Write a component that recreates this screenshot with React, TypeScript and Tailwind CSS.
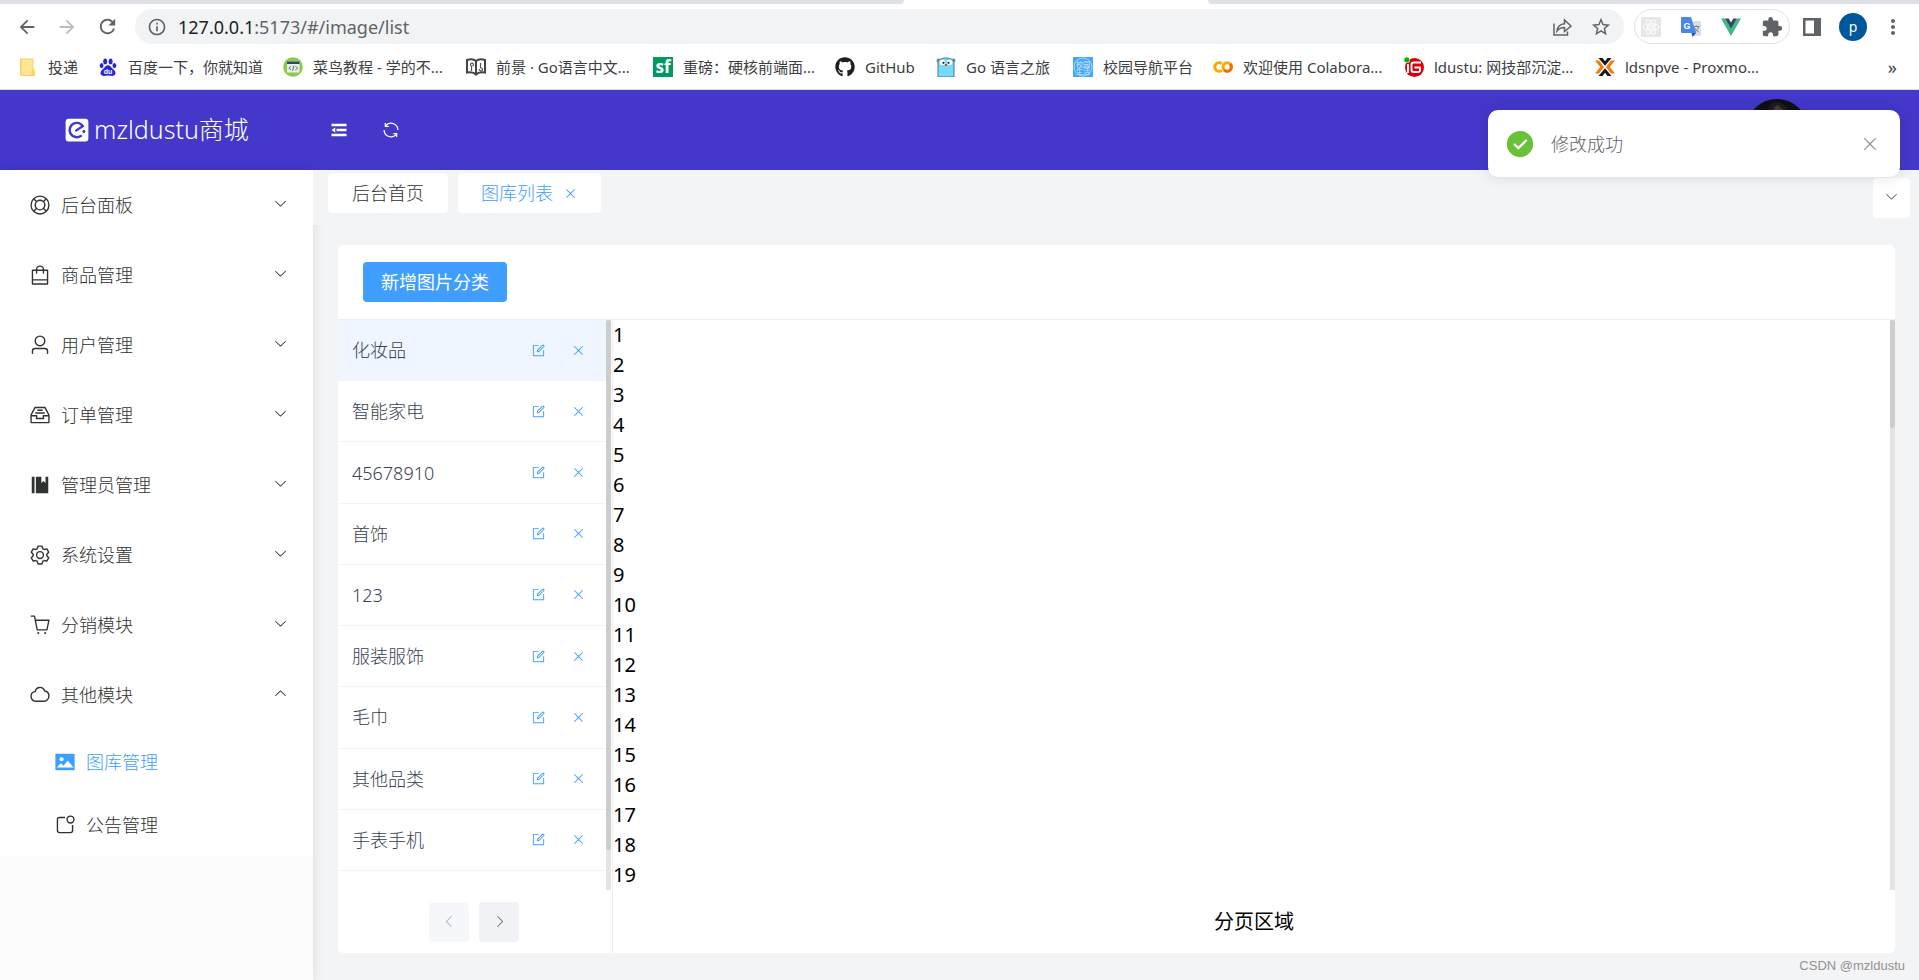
import React, { useState } from 'react';
import {
    MdArrowBack,
    MdArrowForward,
    MdRefresh,
    MdInfoOutline,
    MdStarBorder,
    MdExtension,
    MdMoreVert,
} from 'react-icons/md';
import { FaGithub } from 'react-icons/fa';

// --- ICON PATHS (1024 grid) ---
const ICONS = {
    eleme: 'M176 64h672c61.824 0 112 50.176 112 112v672a112 112 0 0 1-112 112H176A112 112 0 0 1 64 848V176c0-61.824 50.176-112 112-112zm150.528 173.568c-152.896 99.968-196.544 304.064-97.408 456.96a330.688 330.688 0 0 0 456.96 96.64c9.216-5.888 17.6-11.776 25.152-18.56a18.24 18.24 0 0 0 4.224-24.32L700.352 724.8a47.552 47.552 0 0 0-65.536-14.272A234.56 234.56 0 0 1 310.592 641.6C240 533.248 271.104 387.968 379.456 316.48a234.304 234.304 0 0 1 276.352 15.168c1.664.832 2.56 2.56 3.392 4.224 5.888 8.384 3.328 19.328-5.12 25.216L456.832 489.6a47.552 47.552 0 0 0-14.336 65.472l16 24.384c5.888 8.384 16.768 10.88 25.216 5.056l308.224-199.936a19.584 19.584 0 0 0 6.72-23.488v-.896c-4.992-9.216-10.048-17.6-15.104-26.88-99.968-151.168-304.064-194.88-456.96-97.408zM786.88 504.704l-62.208 40.32c-8.32 5.888-10.88 16.768-4.992 25.216L760 632.32c5.888 8.448 16.768 11.008 25.152 5.12l31.104-20.16a55.36 55.36 0 0 0 16-76.48l-20.224-31.04a19.52 19.52 0 0 0-25.152-5.12z',
    fold: 'M896 192H128v128h768V192zm0 256H384v128h512V448zm0 256H128v128h768V704zM320 384 128 512l192 128V384z',
    refresh: 'M771.776 794.88A384 384 0 0 1 128 512h64a320 320 0 0 0 555.712 216.448H654.72a32 32 0 1 1 0-64h149.056a32 32 0 0 1 32 32v148.928a32 32 0 1 1-64 0v-50.56zM276.288 295.616h92.992a32 32 0 0 1 0 64H220.16a32 32 0 0 1-32-32V178.56a32 32 0 0 1 64 0v50.56A384 384 0 0 1 896.128 512h-64a320 320 0 0 0-555.776-216.384z',
    help: 'm759.936 805.248-90.944-91.008A254.912 254.912 0 0 1 512 768a254.912 254.912 0 0 1-156.992-53.76l-90.944 91.008A382.464 382.464 0 0 0 512 896c94.528 0 181.12-34.176 247.936-90.752zm45.312-45.312A382.464 382.464 0 0 0 896 512c0-94.528-34.176-181.12-90.752-247.936l-91.008 90.944C747.904 398.4 768 452.864 768 512c0 59.136-20.096 113.6-53.76 156.992l91.008 90.944zm-45.312-541.184A382.464 382.464 0 0 0 512 128c-94.528 0-181.12 34.176-247.936 90.752l90.944 91.008A254.912 254.912 0 0 1 512 256c59.136 0 113.6 20.096 156.992 53.76l90.944-91.008zm-541.184 45.312A382.464 382.464 0 0 0 128 512c0 94.528 34.176 181.12 90.752 247.936l91.008-90.944A254.912 254.912 0 0 1 256 512c0-59.136 20.096-113.6 53.76-156.992l-91.008-90.944zM512 320a192 192 0 1 0 0 384 192 192 0 0 0 0-384zM512 960a448 448 0 1 1 0-896 448 448 0 0 1 0 896z',
    bag: 'M704 320v96a32 32 0 0 1-32 32h-32V320H384v128h-32a32 32 0 0 1-32-32v-96H192v576h640V320H704zm-384-64a192 192 0 1 1 384 0h160a32 32 0 0 1 32 32v640a32 32 0 0 1-32 32H160a32 32 0 0 1-32-32V288a32 32 0 0 1 32-32h160zm64 0h256a128 128 0 1 0-256 0z M192 704h640v64H192v-64z',
    user: 'M512 512a192 192 0 1 0 0-384 192 192 0 0 0 0 384zm0 64a256 256 0 1 1 0-512 256 256 0 0 1 0 512zm320 320v-96a96 96 0 0 0-96-96H288a96 96 0 0 0-96 96v96a32 32 0 1 1-64 0v-96a160 160 0 0 1 160-160h448a160 160 0 0 1 160 160v96a32 32 0 1 1-64 0z',
    box: 'M288 384h448v64H288v-64zm96-128h256v64H384v-64zM131.456 512H384v128h256V512h252.544L721.856 192H302.144L131.456 512zM896 576H704v128H320V576H128v256h768V576zM275.776 128h472.448a32 32 0 0 1 28.608 17.664l179.84 359.552A32 32 0 0 1 960 519.552V864a32 32 0 0 1-32 32H96a32 32 0 0 1-32-32V519.552a32 32 0 0 1 3.392-14.336l179.776-359.552A32 32 0 0 1 275.776 128z',
    book: 'M576 128v288l96-96 96 96V128h128v768H320V128h256zm-448 0h128v768H128V128z',
    gear: 'M600.704 64a32 32 0 0 1 30.464 22.208l35.2 109.376c14.784 7.232 28.928 15.36 42.432 24.512l112.384-24.192a32 32 0 0 1 34.432 15.36L944.32 364.8a32 32 0 0 1-4.032 37.504l-77.12 85.12a357.12 357.12 0 0 1 0 49.024l77.12 85.248a32 32 0 0 1 4.032 37.504l-88.704 153.6a32 32 0 0 1-34.432 15.296L708.8 803.904c-13.44 9.088-27.648 17.28-42.368 24.512l-35.264 109.376A32 32 0 0 1 600.704 960H423.296a32 32 0 0 1-30.464-22.208L357.696 828.48a351.616 351.616 0 0 1-42.56-24.64l-112.32 24.256a32 32 0 0 1-34.432-15.36L79.68 659.2a32 32 0 0 1 4.032-37.504l77.12-85.248a357.12 357.12 0 0 1 0-48.896l-77.12-85.248A32 32 0 0 1 79.68 364.8l88.704-153.6a32 32 0 0 1 34.432-15.296l112.32 24.256c13.568-9.152 27.776-17.408 42.56-24.64l35.2-109.312A32 32 0 0 1 423.232 64H600.64zm-23.424 64H446.72l-36.352 113.088-24.512 11.968a294.113 294.113 0 0 0-34.816 20.096l-22.656 15.36-116.224-25.088-65.28 113.152 79.68 88.192-1.92 27.136a293.12 293.12 0 0 0 0 40.192l1.92 27.136-79.808 88.192 65.344 113.152 116.224-25.024 22.656 15.296a294.113 294.113 0 0 0 34.816 20.096l24.512 11.968L446.72 896h130.688l36.48-113.152 24.448-11.904a288.282 288.282 0 0 0 34.752-20.096l22.592-15.296 116.288 25.024 65.28-113.152-79.744-88.192 1.92-27.136a293.12 293.12 0 0 0 0-40.256l-1.92-27.136 79.808-88.128-65.344-113.152-116.288 24.96-22.592-15.232a287.616 287.616 0 0 0-34.752-20.096l-24.448-11.904L577.344 128zM512 320a192 192 0 1 1 0 384 192 192 0 0 1 0-384zm0 64a128 128 0 1 0 0 256 128 128 0 0 0 0-256z',
    cart: 'M432 928a48 48 0 1 1 0-96 48 48 0 0 1 0 96zm320 0a48 48 0 1 1 0-96 48 48 0 0 1 0 96zM96 128a32 32 0 0 1 0-64h160a32 32 0 0 1 31.36 25.728L320.64 256H928a32 32 0 0 1 31.296 38.72l-96 448A32 32 0 0 1 832 768H384a32 32 0 0 1-31.36-25.728L229.76 128H96zm314.24 576h395.904l82.304-384H333.44l76.8 384z',
    cloud: 'M737.216 357.952 704 349.824l-11.776-32a192.064 192.064 0 0 0-367.424 23.04l-8.96 39.04-39.04 8.96A192.064 192.064 0 0 0 320 768h368a207.808 207.808 0 0 0 207.808-208 208.32 208.32 0 0 0-158.592-202.048zm15.168-62.208A272.32 272.32 0 0 1 959.744 560a271.808 271.808 0 0 1-271.552 272H320a256 256 0 0 1-57.536-505.536 256.128 256.128 0 0 1 489.92-30.72z',
    picture: 'M96 896a32 32 0 0 1-32-32V160a32 32 0 0 1 32-32h832a32 32 0 0 1 32 32v704a32 32 0 0 1-32 32H96zm315.52-228.48-68.928-68.928a32 32 0 0 0-45.248 0L128 768.064h778.688l-242.112-290.56a32 32 0 0 0-49.216 0L458.752 665.408a32 32 0 0 1-47.232 2.112zM256 384a96 96 0 1 0 192.064-.064A96 96 0 0 0 256 384z',
    notice: 'M512 128v64H256a64 64 0 0 0-64 64v512a64 64 0 0 0 64 64h512a64 64 0 0 0 64-64V512h64v256a128 128 0 0 1-128 128H256a128 128 0 0 1-128-128V256a128 128 0 0 1 128-128h256z M768 384a128 128 0 1 0 0-256 128 128 0 0 0 0 256zm0 64a192 192 0 1 1 0-384 192 192 0 0 1 0 384z',
    edit: 'M832 512a32 32 0 1 1 64 0v352a32 32 0 0 1-32 32H160a32 32 0 0 1-32-32V160a32 32 0 0 1 32-32h352a32 32 0 0 1 0 64H192v640h640V512z M469.952 554.24l52.8-7.552L847.104 237.312a32 32 0 1 0-45.248-45.248L477.44 516.352l-7.552 52.8zm422.4-422.4a96 96 0 0 1 0 135.808l-331.84 331.84a32 32 0 0 1-18.112 9.088L436.8 623.68a32 32 0 0 1-36.224-36.224l15.104-105.6a32 32 0 0 1 9.024-18.112l331.904-331.84a96 96 0 0 1 135.744 0z',
    close: 'M764.288 214.592 512 466.88 259.712 214.592a31.936 31.936 0 0 0-45.12 45.12L466.752 512 214.528 764.224a31.936 31.936 0 1 0 45.12 45.184L512 557.184l252.288 252.288a31.936 31.936 0 0 0 45.12-45.12L557.12 512.064l252.288-252.352a31.936 31.936 0 1 0-45.12-45.184z',
    success: 'M512 64a448 448 0 1 1 0 896 448 448 0 0 1 0-896zm-55.808 536.384-99.52-99.584a38.4 38.4 0 1 0-54.336 54.336l126.72 126.72a38.272 38.272 0 0 0 54.336 0l262.4-262.464a38.4 38.4 0 1 0-54.272-54.336L456.192 600.384z',
    down: 'M831.872 340.864 512 652.672 192.128 340.864a30.592 30.592 0 0 0-42.752 0 29.12 29.12 0 0 0 0 41.6L489.664 714.24a32 32 0 0 0 44.672 0l340.288-331.712a29.12 29.12 0 0 0 0-41.728 30.592 30.592 0 0 0-42.752 0z',
    left: 'M609.408 149.376 277.76 489.6a32 32 0 0 0 0 44.672l331.648 340.352a29.12 29.12 0 0 0 41.728 0 30.592 30.592 0 0 0 0-42.752L339.264 511.936l311.872-319.872a30.592 30.592 0 0 0 0-42.688 29.12 29.12 0 0 0-41.728 0z',
};

type IconName = keyof typeof ICONS;

const Icon: React.FC<{ name: IconName, className?: string }> = ({ name, className }) => (
    <svg viewBox="0 0 1024 1024" fill="currentColor" className={className} aria-hidden="true">
        <path d={ICONS[name]} />
    </svg>
);

// --- BOOKMARK FAVICONS ---
const FolderIcon = () => (
    <svg viewBox="0 0 20 20" className="size-5">
        <path d="M2 1.5h13.5v11.5l1.5 1.5V19H3.5L2 17.8z" fill="#f7d067" />
        <path d="M3.5 2.5h11v12l-1 3.5h-10z" fill="#ffe694" />
        <path d="M13.5 17v-4l1.5-1.5 1.5 1.5v5h-3z" fill="#fbd65f" />
    </svg>
);

const BaiduIcon = () => (
    <svg viewBox="0 0 20 20" className="size-5">
        <g fill="#2529d8">
            <ellipse cx="7.2" cy="4.4" rx="2" ry="2.9" />
            <ellipse cx="12.6" cy="4.4" rx="2" ry="2.9" />
            <ellipse cx="3.6" cy="8.6" rx="1.9" ry="2.6" />
            <ellipse cx="16.4" cy="8.6" rx="1.9" ry="2.6" />
            <path d="M10 8.2c2 0 3 1.600 4.200 3 1.400 1.500 3.300 2.600 3.300 4.600 0 2.200-1.700 3.200-3.600 3.200-1.400 0-2.400-.4-3.900-.4s-2.500.4-3.900.4c-1.900 0-3.600-1-3.600-3.200 0-2 1.900-3.100 3.300-4.600C7 9.800 8 8.200 10 8.200z" />
        </g>
        <text x="10" y="17" textAnchor="middle" fontSize="7" fontWeight="700" fill="#fff" fontFamily="Liberation Sans, sans-serif">du</text>
    </svg>
);

const RunoobIcon = () => (
    <svg viewBox="0 0 20 20" className="size-5">
        <circle cx="10" cy="10" r="9.800" fill="#8ccb4a" />
        <rect x="4" y="4.500" width="12.500" height="11" fill="#e8eee9" />
        <rect x="4" y="4.500" width="12.500" height="2.500" fill="#2c4a5e" />
        <path d="M8 9.200 6 11.200l2 2M12.500 9.200l2 2-2 2M10.900 8.800l-1.300 4.800" fill="none" stroke="#56696b" />
    </svg>
);

const BookIcon = () => (
    <svg viewBox="0 0 20 20" className="size-5">
        <path d="M1 3c3-1 7-.8 9 1 2-1.800 6-2 9-1v12.500c-3-.6-7-.4-9 2-2-2.400-6-2.600-9-2z" fill="#fff" stroke="#444" strokeWidth="2" />
        <path d="M10 4v13" stroke="#444" strokeWidth="2" />
        <path d="M5.500 14V9m0 0a1.500 1.500 0 1 1 1 0M14.500 6v5m0 0a1.500 1.500 0 1 1-1 1" fill="none" stroke="#555" strokeWidth="1.200" />
    </svg>
);

const SfIcon = () => (
    <svg viewBox="0 0 20 20" className="size-5">
        <rect width="20" height="20" fill="#009a61" />
        <text x="10" y="16" textAnchor="middle" fontSize="17" fontWeight="700" fill="#fff" fontFamily="Open Sans, sans-serif">sf</text>
    </svg>
);

const GopherIcon = () => (
    <svg viewBox="0 0 20 20" className="size-5">
        <circle cx="2.500" cy="3.500" r="2" fill="#5c98a8" />
        <circle cx="17.500" cy="3.500" r="2" fill="#5c98a8" />
        <path d="M2 20V6c0-3.500 3.500-5 8-5s8 1.500 8 5v14z" fill="#74dcfb" stroke="#4a7784" />
        <circle cx="6.500" cy="5.500" r="2.800" fill="#fff" />
        <circle cx="13.500" cy="5.500" r="2.800" fill="#fff" />
        <circle cx="7.500" cy="5.800" r="1.100" fill="#222" />
        <circle cx="12.500" cy="5.800" r="1.100" fill="#222" />
        <ellipse cx="10" cy="8.800" rx="2" ry="1.200" fill="#d9c3a3" />
        <ellipse cx="10" cy="8" rx="1.100" ry=".8" fill="#222" />
    </svg>
);

const CampusIcon = () => (
    <svg viewBox="0 0 20 20" className="size-5">
        <rect width="20" height="20" fill="#45a7fb" />
        <circle cx="10" cy="10" r="9" fill="none" stroke="#a8d6ff" />
        <text x="10" y="9.500" textAnchor="middle" fontSize="7" fill="#d3eaff" fontFamily="Noto Sans CJK SC, sans-serif">校园</text>
        <text x="10" y="16.500" textAnchor="middle" fontSize="7" fill="#d3eaff" fontFamily="Noto Sans CJK SC, sans-serif">生活</text>
    </svg>
);

const ColabIcon = () => (
    <svg viewBox="0 0 20 20" className="size-5" fill="none" strokeWidth="3">
        <path d="M8.800 6.700a4.300 4.300 0 1 0 0 6.600" stroke="#f9ab00" />
        <circle cx="14.200" cy="10" r="4.200" stroke="#f9ab00" />
        <path d="M11.200 13a4.200 4.200 0 0 0 6-6" stroke="#e8710a" />
    </svg>
);

const GiteaIcon = () => (
    <svg viewBox="0 0 20 20" className="size-5">
        <circle cx="10.500" cy="10.500" r="9.500" fill="#d8000f" />
        <path d="M17 5.500H9.500a2 2 0 0 0-2 2v5.500a2 2 0 0 0 2 2h5a1.500 1.500 0 0 0 1.500-1.500V10.500H10.500" fill="none" stroke="#fff" strokeWidth="1.900" />
        <path d="M4 7v9" stroke="#fff" strokeWidth="1.900" />
        <circle cx="2.800" cy="2.800" r="3.200" fill="#fff" />
        <circle cx="2.800" cy="2.800" r="2.600" fill="#0bb20c" />
    </svg>
);

const ProxmoxIcon = () => (
    <svg viewBox="0 0 20 20" className="size-5" fill="none">
        <path d="M3.500 1h4L10 4.200 12.500 1h4L10 8.800z" fill="#1a1a1a" />
        <path d="M3.500 19h4l2.500-3.200 2.500 3.200h4L10 11.200z" fill="#1a1a1a" />
        <path d="M0 3.500h4l5 6.500-5 6.500H0L5.200 10z" fill="#f07c0b" />
        <path d="M20 3.500h-4L11 10l5 6.500h4L14.800 10z" fill="#f07c0b" />
    </svg>
);

const BOOKMARKS = [
    { label: '投递', icon: <FolderIcon />, width: 'w-[80px]' },
    { label: '百度一下，你就知道', icon: <BaiduIcon />, width: 'w-[185px]' },
    { label: '菜鸟教程 - 学的不...', icon: <RunoobIcon />, width: 'w-[183px]' },
    { label: '前景 · Go语言中文...', icon: <BookIcon />, width: 'w-[187px]' },
    { label: '重磅：硬核前端面...', icon: <SfIcon />, width: 'w-[182px]' },
    { label: 'GitHub', icon: <FaGithub className="size-5 text-[#1b1f23]" />, width: 'w-[101px]' },
    { label: 'Go 语言之旅', icon: <GopherIcon />, width: 'w-[137px]' },
    { label: '校园导航平台', icon: <CampusIcon />, width: 'w-[140px]' },
    { label: '欢迎使用 Colabora...', icon: <ColabIcon />, width: 'w-[191px]' },
    { label: 'ldustu: 网技部沉淀...', icon: <GiteaIcon />, width: 'w-[191px]' },
    { label: 'ldsnpve - Proxmo...', icon: <ProxmoxIcon />, width: 'w-[180px]' },
];

// --- BROWSER CHROME ---
const BrowserBar = () => (
    <div className="border-b border-[#dadce0] bg-white">
        <div className="flex h-1 bg-white">
            <div className="w-[904px] rounded-br-lg bg-[#dee1e6]"></div>
            <div className="w-[304px]"></div>
            <div className="flex-1 rounded-bl-lg bg-[#dee1e6]"></div>
        </div>
        <div className="flex h-[45px] items-center pl-4 pr-[14px] text-[#5f6368]">
            <div className="flex items-center gap-[18px]">
                <button aria-label="Back"><MdArrowBack className="size-[22px]" /></button>
                <button aria-label="Forward" className="text-[#babcbe]"><MdArrowForward className="size-[22px]" /></button>
                <button aria-label="Reload"><MdRefresh className="size-[23px]" /></button>
            </div>
            <div className="ml-4 flex h-[35px] flex-1 items-center rounded-full bg-[#f1f3f4] pl-3 pr-3">
                <MdInfoOutline className="size-5" />
                <div className="ml-[11px] flex-1 text-lg leading-6"><span className="text-[#202124]">127.0.0.1</span>:5173/#/image/list</div>
                <button aria-label="Share">
                    <svg viewBox="0 0 20 20" className="size-5" fill="none" stroke="currentColor" strokeWidth="1.500">
                        <path d="M2 6.500V18h13.500v-3.500" />
                        <path d="M5 14c.6-4.500 3-7 7.500-7.300V3l6.500 6-6.500 5.500v-4C9 10.600 7 11.500 5 14z" />
                    </svg>
                </button>
                <button aria-label="Bookmark" className="ml-[18px]"><MdStarBorder className="size-[22px]" /></button>
            </div>
            <div className="ml-[10px] flex h-[35px] items-center gap-5 rounded-full border border-[#dfe1e5] px-[6px]">
                <svg viewBox="0 0 20 20" className="size-5">
                    <rect width="20" height="20" rx="1.500" fill="#e6e6e6" />
                    <g fill="none" stroke="#fff" strokeWidth=".9">
                        <circle cx="10" cy="10" r="1.800" />
                        <ellipse cx="10" cy="10" rx="8" ry="3.200" />
                        <ellipse cx="10" cy="10" rx="8" ry="3.200" transform="rotate(60 10 10)" />
                        <ellipse cx="10" cy="10" rx="8" ry="3.200" transform="rotate(120 10 10)" />
                    </g>
                </svg>
                <svg viewBox="0 0 20 20" className="size-5">
                    <path d="M8 4h11a1 1 0 0 1 1 1v13a1 1 0 0 1-1 1h-7z" fill="#dcdfe3" />
                    <path d="M12.500 9.500h6M15.500 8.500v1M17.500 9.500c-.5 2.500-2 4.500-4 5.500M13.500 10.500c.8 2 2.300 3.500 4.300 4.500" fill="none" stroke="#6f8390" />
                    <path d="M1 0h9l5 16H1a1 1 0 0 1-1-1V1a1 1 0 0 1 1-1z" fill="#4a86ee" />
                    <path d="M10.500 16H15l-3.500 4z" fill="#2a4cb5" />
                    <text x="6" y="11.500" textAnchor="middle" fontSize="9" fontWeight="700" fill="#fff" fontFamily="Liberation Sans, sans-serif">G</text>
                </svg>
                <svg viewBox="0 0 20 20" className="size-5">
                    <path d="M0 1.500h4l6 10 6-10h4L10 19z" fill="#41b883" />
                    <path d="M4 1.500h3.700L10 5.500l2.300-4H16l-6 10.300z" fill="#35495e" />
                </svg>
                <MdExtension className="size-[22px]" />
            </div>
            <svg viewBox="0 0 18 18" className="ml-[13px] size-[18px]">
                <path d="M0 0h18v18H0zM2.500 2.500v13H11v-13z" fill="currentColor" fillRule="evenodd" />
            </svg>
            <span className="ml-[18px] flex size-7 items-center justify-center rounded-full bg-[#01579b] text-sm leading-none text-white">p</span>
            <button aria-label="Menu" className="ml-[14px]"><MdMoreVert className="size-6" /></button>
        </div>
        <nav className="flex h-10 items-center pl-[18px] pr-[22px] pb-1 text-[15px] leading-6 text-[#3c4043]">
            {BOOKMARKS.map(b => (
                <a key={b.label} href="#" className={`flex shrink-0 items-center gap-[10px] whitespace-nowrap ${b.width}`}>
                    <span className="shrink-0">{b.icon}</span>
                    <span>{b.label}</span>
                </a>
            ))}
            <button aria-label="More bookmarks" className="ml-auto text-lg leading-6">»</button>
        </nav>
    </div>
);

// --- HEADER ---
const Header = () => (
    <header className="flex h-20 items-center bg-[#4338ca] text-white">
        <div className="flex w-[313px] items-center justify-center gap-1 text-[25px] font-light">
            <Icon name="eleme" className="size-[26px]" />
            <span>mzldustu商城</span>
        </div>
        <button aria-label="Collapse menu" className="ml-4"><Icon name="fold" className="size-5" /></button>
        <button aria-label="Refresh" className="ml-8"><Icon name="refresh" className="size-5" /></button>
        <svg viewBox="0 0 62 62" className="ml-auto mr-[111px] size-[62px]">
            <circle cx="31" cy="31" r="31" fill="#0e1015" />
            <path d="M21 16c1-10 6-13 11-13s10 5 11 13z" fill="#1c1b1e" />
            <path d="M27 12c1-4 3-6 5-6 1 2 4 3 6 6z" fill="#4a3a3a" />
        </svg>
    </header>
);

// --- SIDEBAR ---
const MENU: { label: string, icon: IconName, open?: boolean }[] = [
    { label: '后台面板', icon: 'help' },
    { label: '商品管理', icon: 'bag' },
    { label: '用户管理', icon: 'user' },
    { label: '订单管理', icon: 'box' },
    { label: '管理员管理', icon: 'book' },
    { label: '系统设置', icon: 'gear' },
    { label: '分销模块', icon: 'cart' },
    { label: '其他模块', icon: 'cloud', open: true },
];

const Sidebar = () => (
    <aside className="w-[313px] shrink-0 bg-[#fcfcfc] shadow-[0_0_12px_rgba(0,0,0,0.1)]">
        <nav className="bg-white text-lg font-light text-[#303133]">
            {MENU.map(m => (
                <button key={m.label} className="flex h-[70px] w-full items-center pl-[29px] pr-[25px]">
                    <Icon name={m.icon} className="size-[22px]" />
                    <span className="ml-[10px]">{m.label}</span>
                    <Icon name="down" className={`ml-auto mb-1 size-[15px] ${m.open ? 'rotate-180' : ''}`} />
                </button>
            ))}
            <a href="#" className="flex h-[63px] items-center pl-[54px] text-[#409eff]">
                <Icon name="picture" className="size-[22px]" />
                <span className="ml-[10px]">图库管理</span>
            </a>
            <a href="#" className="flex h-[63px] items-center pl-[54px]">
                <Icon name="notice" className="size-[22px]" />
                <span className="ml-[10px]">公告管理</span>
            </a>
        </nav>
    </aside>
);

// --- TABS ---
const TabBar = () => (
    <div className="relative flex items-start bg-[#f3f4f6] pt-[3px] pb-[7px] pl-[15px] pr-[9px] text-lg font-light">
        <a href="#" className="flex h-10 w-[120px] items-center justify-center rounded bg-white text-[#303133]">后台首页</a>
        <a href="#" className="ml-[10px] flex h-10 w-[143px] items-center justify-center gap-[10px] rounded bg-white text-[#409eff]">
            图库列表
            <Icon name="close" className="size-[15px]" />
        </a>
        <button aria-label="Tab actions" className="ml-auto mt-[5px] flex h-10 w-[37px] items-center justify-center rounded bg-white text-[#606266]">
            <Icon name="down" className="mb-1 size-[15px]" />
        </button>
    </div>
);

// --- GALLERY ---
const CATEGORIES = ['化妆品', '智能家电', '45678910', '首饰', '123', '服装服饰', '毛巾', '其他品类', '手表手机'];

const CategoryList = () => {
    const [active, setActive] = useState('化妆品');

    return (
        <div className="flex w-[275px] shrink-0 flex-col border-r border-[#eeeeee]">
            <div className="relative flex-1">
                <ul className="grid min-h-[551px] grid-rows-9 pr-[6px]">
                    {CATEGORIES.map(c => (
                        <li
                            key={c}
                            onClick={() => setActive(c)}
                            className={`flex items-center border-b border-[#f3f4f6] pl-[14px] pr-5 text-lg font-light text-[#374151] ${active === c ? 'bg-[#eff6ff]' : ''}`}
                        >
                            <span className="mr-auto">{c}</span>
                            <button aria-label={`编辑${c}`} className="text-[#409eff]"><Icon name="edit" className="size-[15px]" /></button>
                            <button aria-label={`删除${c}`} className="ml-[25px] text-[#409eff]"><Icon name="close" className="size-[15px]" /></button>
                        </li>
                    ))}
                </ul>
                <div className="absolute inset-y-0 right-[1px] w-[5px] bg-[#e4e4e4]">
                    <div className="h-[93%] rounded-full bg-[#cdcdcd]"></div>
                </div>
            </div>
            <div className="flex h-[63px] items-center justify-center gap-[10px] pr-[2px] text-[#606266]">
                <button aria-label="上一页" disabled className="flex size-10 items-center justify-center rounded-sm bg-[#f5f7fa] text-[#a8abb2]">
                    <Icon name="left" className="size-[15px]" />
                </button>
                <button aria-label="下一页" className="flex size-10 items-center justify-center rounded-sm bg-[#f0f2f5]">
                    <Icon name="left" className="size-[15px] rotate-180" />
                </button>
            </div>
        </div>
    );
};

const ImageArea = () => (
    <div className="flex flex-1 flex-col text-xl text-black">
        <div className="relative flex-1">
            {Array.from({ length: 19 }, (_, i) => (
                <div key={i} className="leading-[30px]">{i + 1}</div>
            ))}
            <div className="absolute inset-y-0 right-0 w-[5px] bg-[#e4e4e4]">
                <div className="h-[19%] rounded-full bg-[#cdcdcd]"></div>
            </div>
        </div>
        <div className="flex h-[63px] items-center justify-center">分页区域</div>
    </div>
);

// --- NOTIFICATION ---
const SuccessNotice: React.FC<{ close: () => void }> = ({ close }) => (
    <div role="alert" className="absolute top-[110px] right-[19px] flex h-[67px] w-[412px] items-center rounded-[10px] bg-white pl-[17px] pr-5 text-lg font-light text-[#606266] shadow-[0_0_15px_rgba(0,0,0,0.12)]">
        <Icon name="success" className="size-[30px] text-[#67c23a]" />
        <span className="ml-4">修改成功</span>
        <button aria-label="关闭" onClick={close} className="ml-auto text-[#909399]"><Icon name="close" className="size-5" /></button>
    </div>
);

export default function App() {
    const [notice, setNotice] = useState(true);

    return (
        <div className="relative flex min-h-screen flex-col bg-[#f3f4f6] font-['Noto_Sans','Noto_Sans_CJK_SC',sans-serif]">
            <BrowserBar />
            <Header />
            <div className="flex flex-1">
                <Sidebar />
                <main className="flex min-w-0 flex-1 flex-col">
                    <TabBar />
                    <section className="mt-5 mr-6 mb-[27px] ml-[25px] flex flex-1 flex-col overflow-hidden rounded-[5px] bg-white">
                        <div className="flex h-[75px] items-center border-b border-[#eeeeee] pl-[25px]">
                            <button className="h-10 rounded bg-[#409eff] px-[18px] text-lg text-white">新增图片分类</button>
                        </div>
                        <div className="flex flex-1">
                            <CategoryList />
                            <ImageArea />
                        </div>
                    </section>
                </main>
            </div>
            {notice && <SuccessNotice close={() => setNotice(false)} />}
            <p className="absolute right-[14px] bottom-1 font-['Liberation_Sans',sans-serif] text-[13px] leading-5 text-[#929292]">CSDN @mzldustu</p>
        </div>
    );
}
